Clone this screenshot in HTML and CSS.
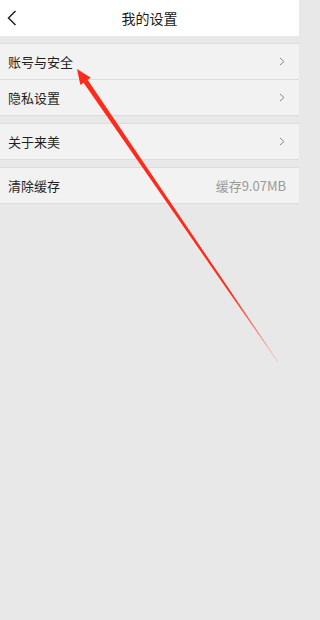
FILE: index.html
```html
<!DOCTYPE html>
<html lang="zh">
<head>
<meta charset="utf-8">
<title>我的设置</title>
<link rel="stylesheet" href="styles.css">
</head>
<body>
<div class="page">
  <header class="topbar">
    <span class="back">
      <svg width="10" height="16" viewBox="0 0 10 16"><path d="M8.5 1 L1.5 8 L8.5 15" fill="none" stroke="#222" stroke-width="1.5"/></svg>
    </span>
    <h1 class="title">我的设置</h1>
  </header>

  <section class="group">
    <div class="row"><span class="label">账号与安全</span><span class="chev"><svg width="6" height="9" viewBox="0 0 6 9"><path d="M1 1 L5 4.5 L1 8" fill="none" stroke="#8a8a8a" stroke-width="1"/></svg></span></div>
    <div class="row"><span class="label">隐私设置</span><span class="chev"><svg width="6" height="9" viewBox="0 0 6 9"><path d="M1 1 L5 4.5 L1 8" fill="none" stroke="#8a8a8a" stroke-width="1"/></svg></span></div>
  </section>

  <section class="group">
    <div class="row"><span class="label">关于来美</span><span class="chev"><svg width="6" height="9" viewBox="0 0 6 9"><path d="M1 1 L5 4.5 L1 8" fill="none" stroke="#8a8a8a" stroke-width="1"/></svg></span></div>
  </section>

  <section class="group">
    <div class="row"><span class="label">清除缓存</span><span class="value">缓存9.07MB</span></div>
  </section>

  <svg class="annotation" width="299" height="620" viewBox="0 0 299 620">
    <defs>
      <linearGradient id="fade" gradientUnits="userSpaceOnUse" x1="85" y1="81" x2="278" y2="362">
        <stop offset="0" stop-color="#ff2a1a" stop-opacity="1"/>
        <stop offset="0.75" stop-color="#ff2a1a" stop-opacity="1"/>
        <stop offset="1" stop-color="#ff2a1a" stop-opacity="0.15"/>
      </linearGradient>
    </defs>
    <polygon points="77,69 90.8,77.8 80.4,85" fill="#ff2a1a"/>
    <polygon points="83.4,82.6 87.6,79.7 278.3,361.8 277.7,362.2" fill="url(#fade)"/>
  </svg>
</div>
</body>
</html>
```

FILE: styles.css
```css
html, body {
  margin: 0;
  padding: 0;
}
body {
  background: #e8e8e8;
  font-family: "Noto Sans CJK SC", "Noto Sans", sans-serif;
  color: #222;
}
.page {
  position: relative;
  width: 299px;
  min-height: 620px;
  background: #e8e8e8;
}
.topbar {
  position: relative;
  height: 36px;
  background: #ffffff;
  display: flex;
  align-items: center;
  justify-content: center;
}
.back {
  position: absolute;
  left: 7px;
  top: 10px;
  display: flex;
}
.title {
  margin: 0;
  font-size: 14px;
  font-weight: normal;
  color: #1a1a1a;
  line-height: 20px;
}
.group {
  margin-top: 7px;
  background: #f2f2f2;
  border-top: 1px solid #dcdcdc;
  border-bottom: 1px solid #dcdcdc;
}
.row {
  height: 35px;
  display: flex;
  align-items: center;
  justify-content: space-between;
  padding: 0 13px 0 8px;
  font-size: 13px;
}
.row + .row {
  border-top: 1px solid #dcdcdc;
}
.label {
  color: #1f1f1f;
}
.chev {
  display: flex;
  margin-right: 1px;
}
.value {
  color: #9a9a9a;
  font-size: 13px;
}
.annotation {
  position: absolute;
  left: 0;
  top: 0;
  pointer-events: none;
}
```
